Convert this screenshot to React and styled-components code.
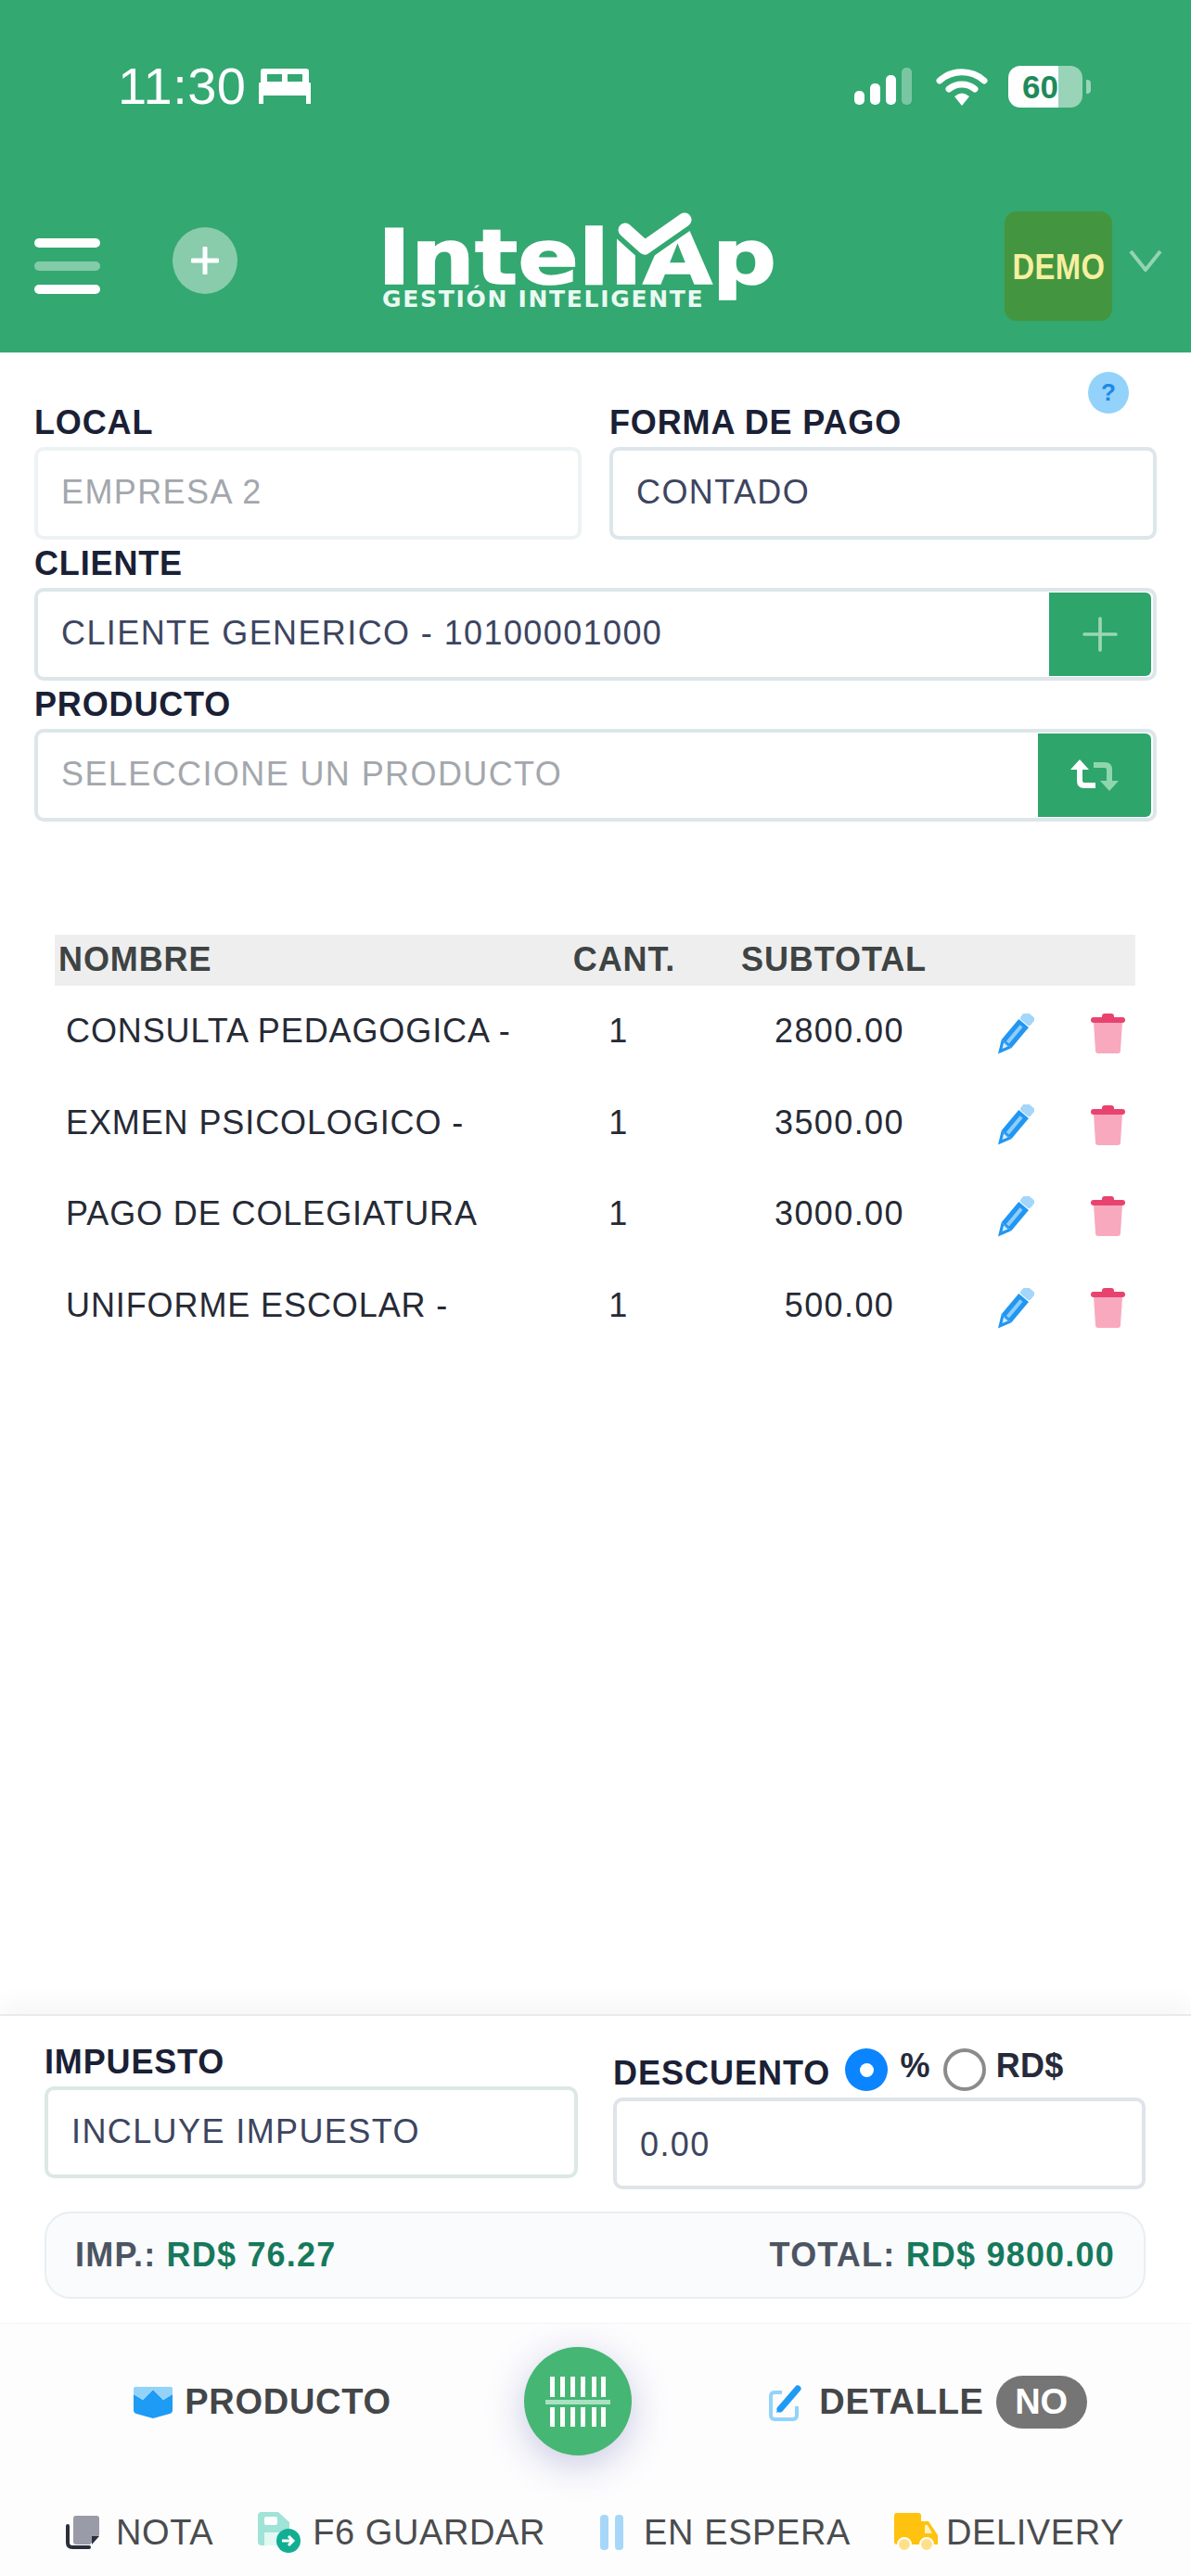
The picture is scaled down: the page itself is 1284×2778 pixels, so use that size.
import React from 'react';
import styled, { createGlobalStyle } from 'styled-components';

const GlobalStyle = createGlobalStyle`
	html, body {
		margin: 0;
		padding: 0;
		background: #fff;
	}
	body {
		font-family: "Liberation Sans", Arial, sans-serif;
	}
	* {
		box-sizing: border-box;
	}
`;

const Page = styled.div`
	width: 1284px;
	min-height: 2778px;
	display: flex;
	flex-direction: column;
	background: #fff;
	position: relative;
	overflow: hidden;
`;

/* header */
const Header = styled.header`
	height: 381px;
	background: #33a871;
	color: #fff;
	display: flex;
	flex-direction: column;
	border-bottom: 1px solid #d9f3e6;
`;

const StatusBar = styled.div`
	display: flex;
	align-items: center;
	height: 52px;
	margin-top: 67px;
	padding: 0 117px 0 127px;
`;

const Clock = styled.span`
	font-size: 56px;
	line-height: 52px;
	letter-spacing: 0.5px;
`;

const BedIcon = styled.svg`
	width: 56px;
	height: 38px;
	margin-left: 14px;
`;

const StatusRight = styled.div`
	margin-left: auto;
	display: flex;
	align-items: center;
`;

const Battery = styled.div`
	width: 80px;
	height: 45px;
	margin-left: 22px;
	border-radius: 13px;
	background: linear-gradient(90deg, #fff 0 68%, rgba(255,255,255,.5) 68% 100%);
	color: #1f8a5b;
	font-size: 35px;
	font-weight: 700;
	line-height: 45px;
	padding-left: 15px;
	position: relative;
	&:after {
		content: '';
		position: absolute;
		right: -9px;
		top: 15px;
		width: 5px;
		height: 15px;
		border-radius: 0 4px 4px 0;
		background: rgba(255,255,255,.5);
	}
`;

const NavBar = styled.div`
	display: flex;
	align-items: center;
	height: 118px;
	margin-top: 109px;
	padding-left: 37px;
`;

const Burger = styled.div`
	width: 71px;
	display: flex;
	flex-direction: column;
	gap: 15px;
`;

const BurgerLine = styled.span`
	height: 10px;
	border-radius: 5px;
	background: #fff;
	opacity: ${props => props.$dim ? .4 : 1};
`;

const AddCircle = styled.div`
	width: 70px;
	height: 72px;
	margin: 0 0 12px 78px;
	border-radius: 50%;
	background: rgba(255,255,255,.42);
	display: flex;
	align-items: center;
	justify-content: center;
`;

const Logo = styled.div`
	position: relative;
	width: 425px;
	height: 106px;
	margin: 0 0 10px 156px;
`;

const LogoWord = styled.div`
	position: absolute;
	left: -5px;
	top: 16px;
	font-family: "DejaVu Sans", sans-serif;
	font-weight: 700;
	font-size: 82px;
	line-height: 66px;
	white-space: nowrap;
	transform: scaleX(1.18);
	transform-origin: left center;
	-webkit-text-stroke: 1.5px #fff;
`;

const LogoCheck = styled.svg`
	position: absolute;
	left: 248px;
	top: 0;
	width: 90px;
	height: 60px;
`;

const LogoTag = styled.div`
	position: absolute;
	left: 0;
	top: 85px;
	font-family: "DejaVu Sans", sans-serif;
	font-weight: 700;
	font-size: 25px;
	line-height: 18px;
	letter-spacing: 1.7px;
	white-space: nowrap;
	color: #eafaf2;
`;

const DemoBadge = styled.div`
	width: 116px;
	height: 118px;
	margin-left: auto;
	border-radius: 13px;
	background: #43963f;
	color: #f6efa0;
	font-weight: 700;
	font-size: 39px;
	display: flex;
	align-items: center;
	justify-content: center;
	padding-top: 2px;
`;

const DemoText = styled.span`
	display: inline-block;
	transform: scaleX(.84);
	letter-spacing: 0.5px;
`;

const Chevron = styled.svg`
	width: 36px;
	height: 24px;
	margin: 0 31px 0 18px;
	transform: translateY(-6px);
`;

/* form */
const FormSection = styled.section`
	position: relative;
	padding: 54px 37px 0;
	display: grid;
	grid-template-columns: 590px 590px;
	column-gap: 30px;
	row-gap: 5px;
`;

const HelpBadge = styled.div`
	position: absolute;
	top: 20px;
	right: 67px;
	width: 44px;
	height: 45px;
	border-radius: 50%;
	background: #93d2fa;
	color: #1e88e5;
	font-size: 26px;
	font-weight: 700;
	text-align: center;
	line-height: 45px;
`;

const Field = styled.div`
	grid-column: ${props => props.$full ? '1 / -1' : 'auto'};
	padding-top: ${props => props.$offset || 0}px;
`;

const Label = styled.div`
	height: 40px;
	margin-bottom: 7px;
	font-size: 36px;
	font-weight: 700;
	line-height: 42px;
	letter-spacing: 0.85px;
	color: #1a2035;
`;

const InputBox = styled.div`
	height: ${props => props.$height || 100}px;
	display: flex;
	align-items: center;
	justify-content: space-between;
	padding: 0 2px 0 25px;
	background: #fff;
	border: 4px solid ${props => props.$border || '#dde6ea'};
	border-radius: 10px;
`;

const InputText = styled.span`
	font-size: 36px;
	letter-spacing: 1.4px;
	padding: ${props => props.$low ? '3px 0 0' : '0 0 2px'};
	color: ${props => props.$muted ? '#a3a7ad' : '#3d4560'};
	white-space: nowrap;
`;

const InputButton = styled.div`
	width: ${props => props.$width}px;
	height: 90px;
	background: #2da56b;
	border-radius: 0 6px 6px 0;
	display: flex;
	align-items: center;
	justify-content: center;
	flex-shrink: 0;
`;

/* table */
const Main = styled.main`
	flex: 1;
`;

const Table = styled.div`
	margin: 122px 60px 0 59px;
`;

const TableHead = styled.div`
	display: grid;
	grid-template-columns: 540px 136px 340px 1fr;
	align-items: center;
	height: 55px;
	padding-bottom: 2px;
	background: #eeeeee;
	font-size: 36px;
	font-weight: 700;
	letter-spacing: 0.9px;
	color: #3e4343;
`;

const HeadCell = styled.span`
	padding-left: ${props => props.$left || 0}px;
	padding-right: ${props => props.$right || 0}px;
	text-align: ${props => props.$center ? 'center' : 'left'};
	white-space: nowrap;
`;

const TableRow = styled.div`
	display: grid;
	grid-template-columns: 540px 136px 340px 1fr;
	align-items: center;
	height: 98.6px;
	font-size: 36px;
	color: #262a35;
`;

const NameCell = styled.span`
	padding-left: 12px;
	letter-spacing: 0.9px;
	white-space: nowrap;
`;

const NumCell = styled.span`
	text-align: center;
	letter-spacing: 1.4px;
`;

const RowActions = styled.div`
	display: flex;
	align-items: center;
	gap: 61px;
	margin-left: -2px;
	padding-top: 5px;
`;

/* bottom panel */
const Panel = styled.section`
	padding: 29px 49px 26px 48px;
	background: #fff;
	border-top: 2px solid #e9ebeb;
	box-shadow: 0 -14px 24px rgba(0,0,0,.035);
	position: relative;
`;

const PanelFields = styled.div`
	display: grid;
	grid-template-columns: 575px 574px;
	column-gap: 38px;
	align-items: start;
`;

const DiscountLabel = styled.div`
	height: 40px;
	margin-bottom: 7px;
	padding-top: 2px;
	display: flex;
	align-items: center;
	font-size: 36px;
	font-weight: 700;
	letter-spacing: 1px;
	color: #1a2035;
	white-space: nowrap;
`;

const Radio = styled.span`
	width: 46px;
	height: 46px;
	margin: 0 ${props => props.$mr || 0}px 8px ${props => props.$ml || 0}px;
	border-radius: 50%;
	flex-shrink: 0;
	background: ${props => props.$on ? '#0a84ff' : '#fff'};
	border: ${props => props.$on ? '0' : '4px solid #8b8b8b'};
	display: flex;
	align-items: center;
	justify-content: center;
	&:after {
		content: '';
		width: 15px;
		height: 15px;
		border-radius: 50%;
		background: #fff;
		display: ${props => props.$on ? 'block' : 'none'};
	}
`;

const RadioText = styled.span`
	font-size: 36px;
	letter-spacing: 0.3px;
	margin-bottom: 16px;
	color: #262a3a;
`;

const TotalBar = styled.div`
	height: 94px;
	margin-top: 24px;
	padding: 0 31px;
	display: flex;
	align-items: center;
	justify-content: space-between;
	background: #fafbfc;
	border: 2px solid #e8eef2;
	border-radius: 28px;
	font-size: 36px;
	font-weight: 700;
	letter-spacing: 1.2px;
	color: #4b5563;
`;

const Amount = styled.span`
	color: #16795c;
`;

/* footer */
const Footer = styled.footer`
	height: 273px;
	padding-top: 25px;
	background: #fdfdfe;
	border-top: 1px solid #f5f5f5;
`;

const ActionRow = styled.div`
	display: grid;
	grid-template-columns: 565px 116px 1fr;
	align-items: center;
	height: 117px;
`;

const ActionItem = styled.div`
	display: flex;
	align-items: center;
	justify-content: center;
	gap: ${props => props.$gap || 12}px;
	padding: 2px 0 0 ${props => props.$shift || 0}px;
	font-size: 38px;
	font-weight: 700;
	letter-spacing: 0.7px;
	color: #444648;
`;

const ScanButton = styled.div`
	width: 116px;
	height: 117px;
	border-radius: 50%;
	background: #45b673;
	box-shadow: 0 10px 42px rgba(90,90,170,.32);
	display: flex;
	align-items: center;
	justify-content: center;
`;

const NoBadge = styled.span`
	width: 98px;
	height: 57px;
	margin-left: -5px;
	border-radius: 29px;
	background: #757575;
	color: #fff;
	font-size: 38px;
	font-weight: 700;
	letter-spacing: 0;
	text-align: center;
	line-height: 57px;
`;

const BottomBar = styled.div`
	display: flex;
	align-items: center;
	height: 50px;
	margin-top: 58px;
	padding-left: 71px;
`;

const BottomItem = styled.div`
	display: flex;
	align-items: center;
	gap: ${props => props.$gap}px;
	margin-left: ${props => props.$ml || 0}px;
	font-size: 38px;
	letter-spacing: 0.6px;
	color: #4a4c4e;
	white-space: nowrap;
`;

const BedGlyph = () => (
	<BedIcon viewBox="0 0 56 38">
		<path fill="#fff" fillRule="evenodd" d="M5 0H51Q54 0 54 3V15H2V3Q2 0 5 0ZM9 6V14H25V6ZM31 6V14H47V6Z" />
		<rect x="0" y="15" width="56" height="14" rx="1" fill="#fff" />
		<rect x="0" y="28" width="5" height="10" fill="#fff" />
		<rect x="51" y="28" width="5" height="10" fill="#fff" />
	</BedIcon>
);

const SignalGlyph = () => (
	<svg width="62" height="40" viewBox="0 0 62 40">
		<rect x="0" y="25" width="11" height="15" rx="5" fill="#fff" />
		<rect x="17" y="17" width="11" height="23" rx="5" fill="#fff" />
		<rect x="34" y="8" width="11" height="32" rx="5" fill="#fff" />
		<rect x="51" y="0" width="11" height="40" rx="5" fill="#fff" opacity=".35" />
	</svg>
);

const WifiGlyph = () => (
	<svg width="56" height="41" viewBox="0 0 56 41" style={{ marginLeft: 26 }}>
		<path d="M4 14A36 36 0 0 1 52 14" fill="none" stroke="#fff" strokeWidth="7" strokeLinecap="round" />
		<path d="M14 23A22 22 0 0 1 42 23" fill="none" stroke="#fff" strokeWidth="7" strokeLinecap="round" />
		<path d="M20 31Q28 24 36 31L28 41Z" fill="#fff" />
	</svg>
);

const PlusGlyph = ({ size, stroke, color }) => (
	<svg width={size} height={size} viewBox="0 0 36 36">
		<path d="M18 2V34M2 18H34" stroke={color} strokeWidth={stroke} strokeLinecap="round" />
	</svg>
);

const RepeatGlyph = () => (
	<svg width="54" height="34" viewBox="0 0 54 34">
		<path d="M11 8V23Q11 28 16 28H28" fill="none" stroke="#fff" strokeWidth="6" />
		<path d="M1 11L11 0L21 11Z" fill="#fff" />
		<path d="M26 6H38Q43 6 43 11V24" fill="none" stroke="#8fd6ae" strokeWidth="6" />
		<path d="M33 23L43 34L53 23Z" fill="#8fd6ae" />
	</svg>
);

const PencilGlyph = () => (
	<svg width="42" height="44" viewBox="0 0 42 44">
		<g transform="rotate(40 21 22)">
			<rect x="14" y="-5" width="14" height="11" rx="3" fill="#a3d6fa" />
			<rect x="14" y="7" width="14" height="29" fill="#2196f3" />
			<rect x="19" y="11" width="4" height="23" fill="#90cdf8" />
			<path d="M14 36H28L21 50Z" fill="#2196f3" />
			<path d="M18 37H24L21 43Z" fill="#d5ecfd" />
		</g>
	</svg>
);

const TrashGlyph = () => (
	<svg width="37" height="43" viewBox="0 0 37 43">
		<path d="M3 9H34L32 40Q32 43 29 43H8Q5 43 5 40Z" fill="#f9a9be" />
		<rect x="0" y="4" width="37" height="6" rx="3" fill="#e8436f" />
		<rect x="12" y="0" width="13" height="7" rx="3" fill="#e8436f" />
	</svg>
);

const BoxGlyph = () => (
	<svg width="44" height="34" viewBox="0 0 44 34">
		<path d="M1 8L11 14L22 3L33 14L43 8V25Q43 28 40 29L22 34L4 29Q1 28 1 25Z" fill="#1e9bf5" />
		<path d="M3 0H41Q43 0 43 2V8L33 14L22 3L11 14L1 8V2Q1 0 3 0Z" fill="#93d3fa" />
	</svg>
);

const EditGlyph = () => (
	<svg width="36" height="40" viewBox="0 0 36 40">
		<path d="M14 9H6Q2 9 2 13V33Q2 38 6 38H26Q30 38 30 33V24" fill="none" stroke="#93d3fa" strokeWidth="4" />
		<path d="M12 27L31 5" stroke="#1e9bf5" strokeWidth="7" strokeLinecap="round" />
		<path d="M8 31L10 24L15 28Z" fill="#1e9bf5" />
	</svg>
);

const BarcodeGlyph = () => {
	const bars = [5, 16, 27, 38, 50, 60];
	return (
		<svg width="70" height="54" viewBox="0 0 70 54">
			{bars.map(x => <rect key={x} x={x} y="0" width="5" height="22" fill="#fff" />)}
			<rect x="0" y="25" width="70" height="5" fill="#a9e2c1" />
			{bars.map(x => <rect key={x} x={x} y="33" width="5" height="21" fill="#fff" />)}
		</svg>
	);
};

const NoteGlyph = () => (
	<svg width="36" height="36" viewBox="0 0 36 36">
		<path d="M11 0H33Q36 0 36 3V21L26 31H11Q8 31 8 28V3Q8 0 11 0Z" fill="#9a9ba8" />
		<path d="M28 22H36L28 31Z" fill="#2b2e3b" />
		<path d="M2 11V29Q2 34 7 34H25" fill="none" stroke="#2b2e3b" strokeWidth="4" strokeLinecap="round" />
	</svg>
);

const SaveGlyph = () => (
	<svg width="46" height="44" viewBox="0 0 46 44">
		<path d="M4 0H22L34 11V36H4Q0 36 0 32V4Q0 0 4 0Z" fill="#a0e3d7" />
		<rect x="7" y="5" width="14" height="9" rx="2" fill="#fff" />
		<rect x="7" y="22" width="18" height="14" fill="#fff" opacity=".7" />
		<circle cx="33" cy="31" r="13" fill="#12ae94" />
		<path d="M26 31H38M33 26L38 31L33 36" fill="none" stroke="#fff" strokeWidth="3" />
	</svg>
);

const PauseGlyph = () => (
	<svg width="25" height="38" viewBox="0 0 25 38">
		<rect x="0" y="0" width="9" height="38" rx="4" fill="#a6d7f8" />
		<rect x="16" y="0" width="9" height="38" rx="4" fill="#a6d7f8" />
	</svg>
);

const TruckGlyph = () => (
	<svg width="47" height="42" viewBox="0 0 47 42">
		<path d="M3 0H26Q29 0 29 3V34H3Q0 34 0 31V3Q0 0 3 0Z" fill="#ffc20e" />
		<path d="M29 9H37L47 24V34H29Z" fill="#ffc20e" />
		<path d="M33 13H36L41 22H33Z" fill="#fff3c4" />
		<circle cx="11" cy="34" r="7" fill="#ffe08a" stroke="#fff" strokeWidth="2" />
		<circle cx="35" cy="34" r="7" fill="#ffe08a" stroke="#fff" strokeWidth="2" />
	</svg>
);

const rows = [
	{ name: 'CONSULTA PEDAGOGICA -', qty: 1, total: '2800.00' },
	{ name: 'EXMEN PSICOLOGICO -', qty: 1, total: '3500.00' },
	{ name: 'PAGO DE COLEGIATURA', qty: 1, total: '3000.00' },
	{ name: 'UNIFORME ESCOLAR -', qty: 1, total: '500.00' },
];

const App = () => {
	return (
		<Page>
			<GlobalStyle />
			<Header>
				<StatusBar>
					<Clock>11:30</Clock>
					<BedGlyph />
					<StatusRight>
						<SignalGlyph />
						<WifiGlyph />
						<Battery>60</Battery>
					</StatusRight>
				</StatusBar>
				<NavBar>
					<Burger>
						<BurgerLine />
						<BurgerLine $dim />
						<BurgerLine />
					</Burger>
					<AddCircle>
						<PlusGlyph size={30} stroke={6} color="#fff" />
					</AddCircle>
					<Logo>
						<LogoWord>IntelIAp</LogoWord>
						<LogoCheck viewBox="0 0 90 60">
							<path d="M14 19L35 38L78 8" fill="none" stroke="#33a871" strokeWidth="26" strokeLinecap="round" strokeLinejoin="round" />
							<path d="M14 19L35 38L78 8" fill="none" stroke="#fff" strokeWidth="15" strokeLinecap="round" strokeLinejoin="round" />
						</LogoCheck>
						<LogoTag>GESTIÓN INTELIGENTE</LogoTag>
					</Logo>
					<DemoBadge><DemoText>DEMO</DemoText></DemoBadge>
					<Chevron viewBox="0 0 36 24">
						<path d="M2 2L18 22L34 2" fill="none" stroke="#93d4b4" strokeWidth="4" />
					</Chevron>
				</NavBar>
			</Header>

			<Main>
				<FormSection>
					<HelpBadge>?</HelpBadge>
					<Field>
						<Label>LOCAL</Label>
						<InputBox $border="#edf3f4"><InputText $muted>EMPRESA 2</InputText></InputBox>
					</Field>
					<Field>
						<Label>FORMA DE PAGO</Label>
						<InputBox><InputText>CONTADO</InputText></InputBox>
					</Field>
					<Field $full>
						<Label>CLIENTE</Label>
						<InputBox>
							<InputText>CLIENTE GENERICO - 10100001000</InputText>
							<InputButton $width={110}><PlusGlyph size={38} stroke={3.5} color="#9bd6b5" /></InputButton>
						</InputBox>
					</Field>
					<Field $full>
						<Label>PRODUCTO</Label>
						<InputBox>
							<InputText $muted>SELECCIONE UN PRODUCTO</InputText>
							<InputButton $width={122}><RepeatGlyph /></InputButton>
						</InputBox>
					</Field>
				</FormSection>

				<Table>
					<TableHead>
						<HeadCell $left={4}>NOMBRE</HeadCell>
						<HeadCell $center $left={12}>CANT.</HeadCell>
						<HeadCell $center $right={12}>SUBTOTAL</HeadCell>
						<span />
					</TableHead>
					{rows.map(row => (
						<TableRow key={row.name}>
							<NameCell>{row.name}</NameCell>
							<NumCell>{row.qty}</NumCell>
							<NumCell>{row.total}</NumCell>
							<RowActions>
								<PencilGlyph />
								<TrashGlyph />
							</RowActions>
						</TableRow>
					))}
				</Table>
			</Main>

			<Panel>
				<PanelFields>
					<Field>
						<Label>IMPUESTO</Label>
						<InputBox $height={99} $border="#dce8e6"><InputText>INCLUYE IMPUESTO</InputText></InputBox>
					</Field>
					<Field $offset={12}>
						<DiscountLabel>
							DESCUENTO
							<Radio $on $ml={16} $mr={13} />
							<RadioText>%</RadioText>
							<Radio $ml={14} $mr={11} />
							<RadioText>RD$</RadioText>
						</DiscountLabel>
						<InputBox $height={99} $border="#dfe3ea"><InputText $low>0.00</InputText></InputBox>
					</Field>
				</PanelFields>
				<TotalBar>
					<span>IMP.: <Amount>RD$ 76.27</Amount></span>
					<span>TOTAL: <Amount>RD$ 9800.00</Amount></span>
				</TotalBar>
			</Panel>

			<Footer>
				<ActionRow>
					<ActionItem>
						<BoxGlyph />
						PRODUCTO
					</ActionItem>
					<ScanButton><BarcodeGlyph /></ScanButton>
					<ActionItem $shift={36} $gap={18}>
						<EditGlyph />
						DETALLE
						<NoBadge>NO</NoBadge>
					</ActionItem>
				</ActionRow>
				<BottomBar>
					<BottomItem $gap={18}><NoteGlyph />NOTA</BottomItem>
					<BottomItem $gap={13} $ml={48}><SaveGlyph />F6 GUARDAR</BottomItem>
					<BottomItem $gap={22} $ml={59}><PauseGlyph />EN ESPERA</BottomItem>
					<BottomItem $gap={9} $ml={47}><TruckGlyph />DELIVERY</BottomItem>
				</BottomBar>
			</Footer>
		</Page>
	);
};

export default App;
